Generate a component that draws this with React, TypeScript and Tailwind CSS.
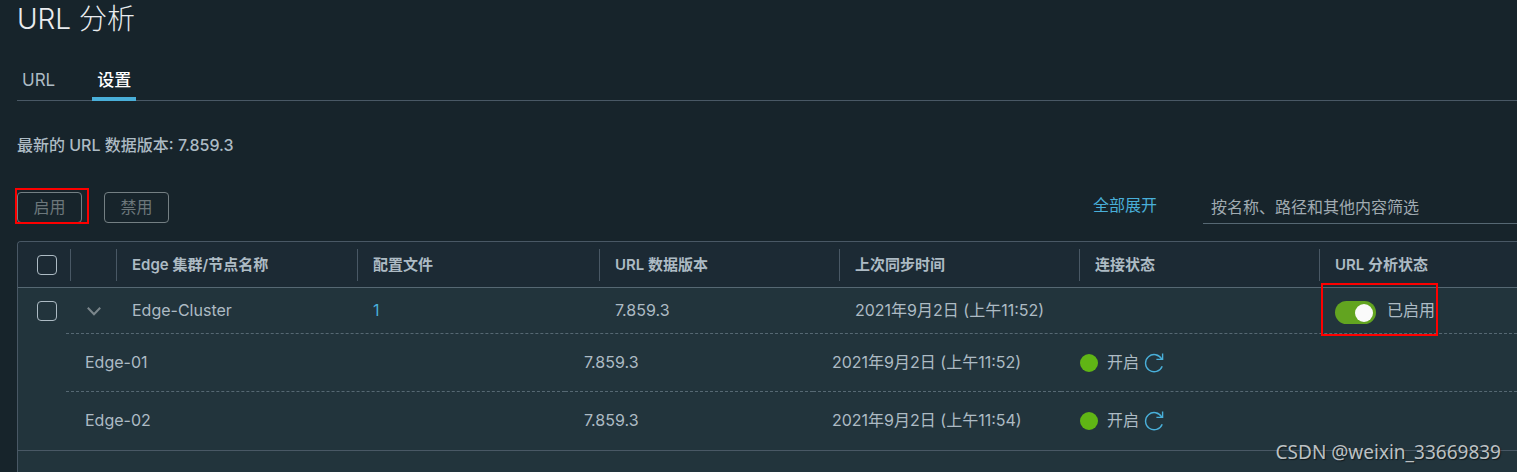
import { useState } from 'react';

interface EdgeNode {
  name: string;
  version: string;
  syncedAt: string;
  status: string;
}

const nodes: EdgeNode[] = [
  { name: 'Edge-01', version: '7.859.3', syncedAt: '2021年9月2日 (上午11:52)', status: '开启' },
  { name: 'Edge-02', version: '7.859.3', syncedAt: '2021年9月2日 (上午11:54)', status: '开启' },
];

const headers = ['Edge 集群/节点名称', '配置文件', 'URL 数据版本', '上次同步时间', '连接状态', 'URL 分析状态'];

function Checkbox({ label }: { label: string }) {
  return (
    <input
      type="checkbox"
      aria-label={label}
      className="ml-[19px] block h-5 w-5 appearance-none rounded border border-[#adbbc4] checked:bg-[#49afd9]"
    />
  );
}

function RefreshIcon() {
  return (
    <svg width="20" height="20" viewBox="0 0 20 20" fill="none" stroke="currentColor" strokeWidth="1.4">
      <path d="M18.2 13.2A8.6 8.6 0 1 1 17.8 6.2" />
      <path d="M18.6 0.6V6.4H12.4" />
    </svg>
  );
}

function CaretIcon() {
  return (
    <svg width="16" height="16" viewBox="0 0 16 16" fill="none" stroke="currentColor" strokeWidth="2">
      <path d="M1.8 4.8L8 11.2L14.2 4.8" />
    </svg>
  );
}

// Highlight frame drawn around the important controls
function Marker({ className }: { className: string }) {
  return <span aria-hidden="true" className={`pointer-events-none absolute border-2 border-[#fe0000] ${className}`} />;
}

function NodeTable() {
  return (
    <table className="w-full table-fixed border-separate border-spacing-0 text-left">
      <colgroup>
        <col className="w-[499px]" />
        <col className="w-[248px]" />
        <col className="w-[248px]" />
        <col />
      </colgroup>
      <tbody>
        {nodes.map((node) => (
          <tr key={node.name} className="h-[58px] *:border-dashed *:border-[#566873] not-last:*:border-b">
            <td className="pb-0.5 pl-[19px]">{node.name}</td>
            <td className="pb-0.5 pl-[19px]">{node.version}</td>
            <td className="pb-0.5 pl-[19px]">{node.syncedAt}</td>
            <td className="pl-[19px]">
              <div className="flex items-center">
                <span className="mr-[9px] h-[18px] w-[18px] rounded-full bg-[#60b515]" />
                <span className="mr-[5px] pb-0.5">{node.status}</span>
                <button type="button" aria-label="刷新" className="text-[#49afd9]">
                  <RefreshIcon />
                </button>
              </div>
            </td>
          </tr>
        ))}
      </tbody>
    </table>
  );
}

export default function App() {
  const [enabled, setEnabled] = useState(true);
  const [expanded, setExpanded] = useState(true);
  const [filter, setFilter] = useState('');

  return (
    <div className="relative flex min-h-screen flex-col overflow-hidden bg-[#17242b] pl-[17px] font-[Inter,'Noto_Sans_CJK_SC',sans-serif] text-base leading-6 text-[#adbbc4]">
      <h1 className="pt-px text-[28px] leading-9 font-light text-[#e9ecef]">URL 分析</h1>

      <nav className="mt-6 flex gap-8 border-b border-[#495865] text-[17px]">
        <button type="button" className="-mb-px h-10 px-[5px] pb-0.5">
          URL
        </button>
        <button type="button" className="-mb-px h-10 border-b-4 border-[#49afd9] px-[5px] pt-0.5 font-medium text-white">
          设置
        </button>
      </nav>

      <p className="mt-8 font-medium">最新的 URL 数据版本: 7.859.3</p>

      <div className="mt-[35px] flex items-start">
        <div className="relative">
          <button type="button" className="block h-[31px] w-[65px] rounded border border-[#747f83] pb-0.5 text-[#6c777b]">
            启用
          </button>
          <Marker className="-top-1 -left-0.5 h-9 w-[74px]" />
        </div>
        <button type="button" className="ml-[22px] block h-[31px] w-[65px] rounded border border-[#747f83] pb-0.5 text-[#6c777b]">
          禁用
        </button>
        <button type="button" className="mt-px ml-auto text-[#49afd9]" onClick={() => setExpanded(true)}>
          全部展开
        </button>
        <input
          type="text"
          aria-label="筛选"
          value={filter}
          onChange={(e) => setFilter(e.target.value)}
          placeholder="按名称、路径和其他内容筛选"
          className="ml-[46px] h-8 w-[314px] border-b border-[#566873] bg-transparent pb-0.5 pl-2 outline-none placeholder:text-[#a0abb1]"
        />
      </div>

      <main className="mt-[17px] flex-1 overflow-hidden rounded-tl border-t border-l border-[#495865] bg-[#22343c]">
        <table className="w-full table-fixed border-separate border-spacing-0 text-left">
          <colgroup>
            <col className="w-[52px]" />
            <col className="w-[46px]" />
            <col className="w-[241px]" />
            <col className="w-[242px]" />
            <col className="w-[240px]" />
            <col className="w-[240px]" />
            <col className="w-[240px]" />
            <col />
          </colgroup>
          <thead>
            <tr className="h-[46px] bg-[#1c2a34] text-[15px] *:border-b *:border-[#566873]">
              <th>
                <Checkbox label="全选" />
              </th>
              <th>
                <div className="h-8 border-l border-[#495865]" />
              </th>
              {headers.map((title) => (
                <th key={title} className="font-semibold">
                  <div className="flex h-8 items-center border-l border-[#495865] pl-[15px]">{title}</div>
                </th>
              ))}
            </tr>
          </thead>
          <tbody>
            <tr className="h-[45px]">
              <td>
                <Checkbox label="Edge-Cluster" />
              </td>
              <td>
                <button
                  type="button"
                  aria-label="展开"
                  aria-expanded={expanded}
                  className="ml-4 block text-[#7b868b]"
                  onClick={() => setExpanded(!expanded)}
                >
                  <CaretIcon />
                </button>
              </td>
              <td className="pb-0.5 pl-4">Edge-Cluster</td>
              <td className="pb-0.5 pl-4">
                <a href="#profiles" className="text-[#49afd9]">
                  1
                </a>
              </td>
              <td className="pb-0.5 pl-4">7.859.3</td>
              <td className="pb-0.5 pl-4">2021年9月2日 (上午11:52)</td>
              <td />
              <td className="pl-4">
                <div className="relative flex">
                  <label className="flex items-center gap-[11px]">
                    <input
                      type="checkbox"
                      role="switch"
                      checked={enabled}
                      onChange={(e) => setEnabled(e.target.checked)}
                      className="mt-1 flex h-[23px] w-[41px] appearance-none items-center rounded-full bg-[#565656] px-[3px] before:h-[18px] before:w-[18px] before:rounded-full before:bg-[#fafafa] checked:justify-end checked:bg-[#62a420]"
                    />
                    <span className="pb-0.5">已启用</span>
                  </label>
                  <Marker className="-top-3.5 -left-3.5 h-[53px] w-[117px]" />
                </div>
              </td>
            </tr>
            {expanded && (
              <tr>
                <td colSpan={8} className="border-b border-[#495865] pl-12">
                  <div className="border-t border-dashed border-[#566873]">
                    <NodeTable />
                  </div>
                </td>
              </tr>
            )}
          </tbody>
        </table>
      </main>

      <span className="absolute right-4 bottom-2 font-['Noto_Sans',sans-serif] text-[19px] text-[#bcc1c4] [text-shadow:1px_1px_1px_#0008]">
        CSDN @weixin_33669839
      </span>
    </div>
  );
}
